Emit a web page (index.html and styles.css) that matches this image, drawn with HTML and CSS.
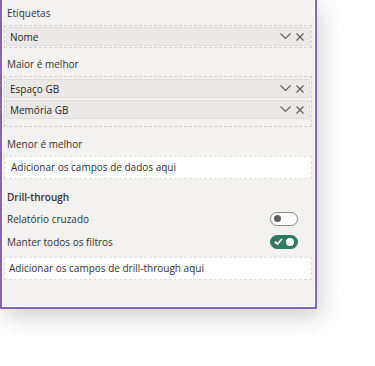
FILE: index.html
```html
<!DOCTYPE html>
<html lang="pt">
<head>
  <meta charset="UTF-8" />
  <meta name="viewport" content="width=device-width, initial-scale=1.0"/>
  <title>Campos</title>
  <link rel="stylesheet" href="styles.css">
</head>
<body>

  <div class="pane">
    <div class="pane-inner">
      <div class="label first">Etiquetas</div>
      <div class="well">
        <div class="pill">
          <span>Nome</span>
          <span class="pill-icons">
            <svg width="11" height="7" viewBox="0 0 11 7"><path d="M0.5 0.5 L5.5 5.5 L10.5 0.5" fill="none" stroke="#605e5c" stroke-width="1.1"/></svg>
            <svg width="8" height="8" viewBox="0 0 8 8"><path d="M0.5 0.5 L7.5 7.5 M7.5 0.5 L0.5 7.5" fill="none" stroke="#605e5c" stroke-width="1.2"/></svg>
          </span>
        </div>
      </div>

      <div class="label">Maior é melhor</div>
      <div class="well tall">
        <div class="pill">
          <span>Espaço GB</span>
          <span class="pill-icons">
            <svg width="11" height="7" viewBox="0 0 11 7"><path d="M0.5 0.5 L5.5 5.5 L10.5 0.5" fill="none" stroke="#605e5c" stroke-width="1.1"/></svg>
            <svg width="8" height="8" viewBox="0 0 8 8"><path d="M0.5 0.5 L7.5 7.5 M7.5 0.5 L0.5 7.5" fill="none" stroke="#605e5c" stroke-width="1.2"/></svg>
          </span>
        </div>
        <div class="pill">
          <span>Memória GB</span>
          <span class="pill-icons">
            <svg width="11" height="7" viewBox="0 0 11 7"><path d="M0.5 0.5 L5.5 5.5 L10.5 0.5" fill="none" stroke="#605e5c" stroke-width="1.1"/></svg>
            <svg width="8" height="8" viewBox="0 0 8 8"><path d="M0.5 0.5 L7.5 7.5 M7.5 0.5 L0.5 7.5" fill="none" stroke="#605e5c" stroke-width="1.2"/></svg>
          </span>
        </div>
      </div>

      <div class="label spaced">Menor é melhor</div>
      <div class="drop">Adicionar os campos de dados aqui</div>

      <div class="heading">Drill-through</div>
      <div class="option">
        <span>Relatório cruzado</span>
        <span class="toggle"><span class="knob"></span></span>
      </div>
      <div class="option last-option">
        <span>Manter todos os filtros</span>
        <span class="toggle on">
          <svg width="9" height="7" viewBox="0 0 9 7"><path d="M1 3.6 L3.4 6 L8 1" fill="none" stroke="#fff" stroke-width="1.8"/></svg>
          <span class="knob"></span>
        </span>
      </div>
      <div class="drop last">Adicionar os campos de drill-through aqui</div>
    </div>
  </div>

</body>
</html>
```

FILE: styles.css
```css
body {
  margin: 0;
  padding: 0;
  background: #ffffff;
  font-family: 'Open Sans', sans-serif;
  font-size: 10px;
  color: #323130;
  height: 366px;
  overflow: hidden;
}

.pane {
  width: 313px;
  height: 307px;
  border: 2px solid #8764b8;
  border-top: none;
  background: #f3f2f1;
  box-shadow: 4px 8px 22px rgba(0, 0, 0, 0.18);
}

.pane-inner {
  height: 306px;
  border: 1px solid #ffffff;
  border-top: none;
}

.label {
  padding: 6px 4px 2px;
  line-height: 20px;
}

.label.first {
  padding-top: 3px;
}

.label.spaced {
  padding-top: 7px;
  padding-bottom: 2px;
}

.well {
  margin: 0 2px 0 1px;
  padding: 1px;
  border: 1px dashed #d2d0ce;
}

.well.tall {
  padding-top: 2px;
  padding-bottom: 7px;
}

.pill {
  display: flex;
  align-items: center;
  justify-content: space-between;
  height: 17px;
  padding: 0 5px 0 3px;
  background: #eae9e7;
  border: 1px solid #e1dfdd;
  color: #252423;
}

.pill + .pill {
  margin-top: 2px;
}

.pill-icons {
  display: flex;
  align-items: center;
  gap: 5px;
}

.drop {
  margin: 0 2px 0 1px;
  padding: 0 6px;
  height: 21px;
  line-height: 21px;
  background: #ffffff;
  border: 1px dashed #e1dfdd;
  color: #323130;
}

.drop.last {
  padding-left: 4px;
}

.heading {
  padding: 8px 4px 0;
  line-height: 20px;
  font-weight: 600;
}

.option {
  display: flex;
  align-items: center;
  justify-content: space-between;
  padding: 0 16px 0 4px;
  height: 23px;
}

.last-option {
  margin-bottom: 4px;
}

.toggle {
  box-sizing: border-box;
  display: flex;
  align-items: center;
  width: 28px;
  height: 14px;
  padding: 0 3px;
  border: 1px solid #8a8886;
  border-radius: 7px;
  background: #ffffff;
}

.toggle .knob {
  width: 7px;
  height: 7px;
  border-radius: 50%;
  background: #605e5c;
}

.toggle.on {
  justify-content: space-between;
  border-color: #2f7a60;
  background: #2f7a60;
}

.toggle.on .knob {
  width: 8px;
  height: 8px;
  background: #ffffff;
}
```
